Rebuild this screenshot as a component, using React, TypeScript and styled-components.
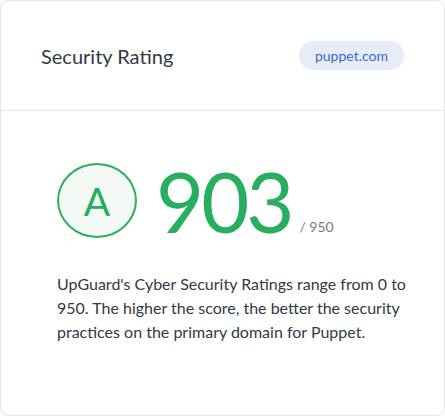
import React from "react";
import styled, { createGlobalStyle } from "styled-components";

const Global = createGlobalStyle`
  html, body { margin: 0; padding: 0; background: #ffffff; }
  body { font-family: Lato, "Noto Sans", sans-serif; }
  * { box-sizing: border-box; }
`;

const Card = styled.div`
  width: 445px;
  height: 416px;
  border: 1px solid #e3e5e9;
  border-radius: 8px;
  background: #ffffff;
  display: flex;
  flex-direction: column;
`;

const Header = styled.div`
  height: 110px;
  display: flex;
  align-items: center;
  justify-content: space-between;
  padding: 0 40px 0 40px;
  border-bottom: 1px solid #e3e5e9;
`;

const Title = styled.h2`
  margin: 0;
  font-size: 20px;
  font-weight: 400;
  color: #333a44;
  letter-spacing: 0;
`;

const Pill = styled.span`
  display: inline-flex;
  align-items: center;
  height: 29px;
  padding: 0 16px;
  border-radius: 15px;
  background: #e6ecf8;
  color: #3a68cf;
  font-size: 14px;
`;

const Body = styled.div`
  padding: 44px 30px 0 56px;
  display: flex;
  flex-direction: column;
`;

const ScoreRow = styled.div`
  display: flex;
  align-items: flex-end;
`;

const Badge = styled.div`
  width: 80px;
  height: 75px;
  border: 2px solid #2bb05e;
  border-radius: 50%;
  background: #f4f9f6;
  display: flex;
  align-items: center;
  justify-content: center;
  color: #27ae5f;
  font-size: 39px;
  font-weight: 400;
  line-height: 1;
  padding-top: 1px;
`;

const Score = styled.span`
  margin-left: 19px;
  font-size: 83px;
  font-weight: 400;
  line-height: 1;
  color: #27ae5f;
  letter-spacing: -3px;
  position: relative;
  top: 5px;
`;

const Max = styled.span`
  margin-left: 8px;
  font-size: 14px;
  color: #777c84;
  margin-bottom: 3px;
`;

const Desc = styled.p`
  margin: 34px 0 0 0;
  font-size: 16px;
  line-height: 24px;
  color: #333a44;
  max-width: 355px;
`;

export default function App() {
  return (
    <>
      <Global />
      <Card>
        <Header>
          <Title>Security Rating</Title>
          <Pill>puppet.com</Pill>
        </Header>
        <Body>
          <ScoreRow>
            <Badge>A</Badge>
            <Score>903</Score>
            <Max>/ 950</Max>
          </ScoreRow>
          <Desc>
            UpGuard's Cyber Security Ratings range from 0 to 950. The higher the
            score, the better the security practices on the primary domain for
            Puppet.
          </Desc>
        </Body>
      </Card>
    </>
  );
}
